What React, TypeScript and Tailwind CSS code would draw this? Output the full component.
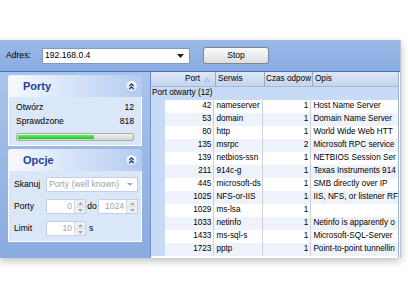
import React from "react";

const rows: [string, string, string, string][] = [
  ["42", "nameserver", "1", "Host Name Server"],
  ["53", "domain", "1", "Domain Name Server"],
  ["80", "http", "1", "World Wide Web HTT"],
  ["135", "msrpc", "2", "Microsoft RPC service"],
  ["139", "netbios-ssn", "1", "NETBIOS Session Ser"],
  ["211", "914c-g", "1", "Texas Instruments 914"],
  ["445", "microsoft-ds", "1", "SMB directly over IP"],
  ["1025", "NFS-or-IIS", "1", "IIS, NFS, or listener RF"],
  ["1029", "ms-lsa", "1", ""],
  ["1033", "netinfo", "1", "Netinfo is apparently o"],
  ["1433", "ms-sql-s", "1", "Microsoft-SQL-Server"],
  ["1723", "pptp", "1", "Point-to-point tunnellin"],
];

const Collapse = () => (
  <svg width="13" height="13" viewBox="0 0 13 13">
    <defs>
      <linearGradient id="cg" x1="0" y1="0" x2="0" y2="1">
        <stop offset="0" stopColor="#ffffff" />
        <stop offset="1" stopColor="#c9d8f2" />
      </linearGradient>
    </defs>
    <circle cx="6.5" cy="6.5" r="6" fill="url(#cg)" stroke="#a9bfe6" strokeWidth="0.8" />
    <path d="M4.3 6 L6.5 3.8 L8.7 6 M4.3 9 L6.5 6.8 L8.7 9" fill="none" stroke="#1e3470" strokeWidth="1.2" />
  </svg>
);

const Spin = ({ value, w }: { value: string; w: string }) => (
  <div className={`flex h-[15px] ${w} border border-[#c5cfdd] bg-white`}>
    <div className="flex-1 text-right pr-[2px] text-[#a3a3a3] leading-[13px]">{value}</div>
    <div className="w-[11px] flex flex-col border-l border-[#d6dbe2] bg-[#eef0f3]">
      <div className="flex-1 flex items-center justify-center border-b border-[#d6dbe2]">
        <svg width="5" height="3" viewBox="0 0 5 3"><path d="M0 3 L2.5 0 L5 3 Z" fill="#a8a8a8" /></svg>
      </div>
      <div className="flex-1 flex items-center justify-center">
        <svg width="5" height="3" viewBox="0 0 5 3"><path d="M0 0 L2.5 3 L5 0 Z" fill="#a8a8a8" /></svg>
      </div>
    </div>
  </div>
);

const GroupHeader = ({ title }: { title: string }) => (
  <div className="h-[22px] flex items-center justify-between pl-[15px] pr-[4px] rounded-t-[3px] bg-gradient-to-r from-[#f7faff] to-[#b3cbf0]">
    <span className="font-bold text-[11px] text-[#21409a]">{title}</span>
    <Collapse />
  </div>
);

export default function App() {
  return (
    <div className="w-[408px] h-[299px] bg-white overflow-hidden pt-[40px] text-[8.6px] text-black" style={{ fontFamily: '"Liberation Sans", Arial, sans-serif' }}>
      <div className="w-[401px] h-[218px] flex flex-col border-r border-[#b9c5d6] shadow-[0_3px_8px_rgba(0,0,0,0.25)]">
        {/* toolbar */}
        <div className="h-[32px] flex items-center bg-gradient-to-b from-[#9ab9e8] to-[#89abe0] border-b border-[#4b70c2]">
          <span className="w-[42px] pl-[6px]">Adres:</span>
          <div className="w-[148px] h-[16px] flex items-center justify-between bg-white border border-[#7f9db9] pl-[2px] pr-[5px]">
            <span>192.168.0.4</span>
            <svg width="7" height="4" viewBox="0 0 7 4"><path d="M0 0 H7 L3.5 4 Z" fill="#222" /></svg>
          </div>
          <button className="ml-[13px] w-[66px] h-[17px] rounded-[3px] border border-[#7b8694] bg-gradient-to-b from-[#fbfbfb] to-[#dedede] text-[8.6px] leading-none">
            Stop
          </button>
        </div>
        {/* content */}
        <div className="flex-1 flex min-h-0">
          <div className="w-[151px] px-[8px] pt-[3px] flex flex-col gap-[3px] bg-gradient-to-b from-[#a9c4ec] to-[#8aabdf] border-r border-[#6f90cc]">
            <div className="flex flex-col">
              <GroupHeader title="Porty" />
              <div className="h-[49px] bg-[#dae7f9] border border-t-0 border-white px-[7px] pt-[3px]">
                <div className="h-[14px] flex items-center justify-between"><span>Otwórz</span><span>12</span></div>
                <div className="h-[14px] flex items-center justify-between"><span>Sprawdzone</span><span>818</span></div>
                <div className="mt-[5px] h-[8px] rounded-[2px] border border-[#a9a9a9] bg-gradient-to-b from-[#f2f2f2] to-[#d4d4d4] p-[1px]">
                  <div className="h-full w-[67%] bg-gradient-to-b from-[#5ef05e] to-[#19c419]" />
                </div>
              </div>
            </div>
            <div className="flex flex-col">
              <GroupHeader title="Opcje" />
              <div className="h-[71px] bg-[#dae7f9] border border-t-0 border-white pl-[5px] pt-[6px] flex flex-col gap-[7px]">
                <div className="flex items-center">
                  <span className="w-[32px]">Skanuj</span>
                  <div className="w-[92px] h-[15px] flex items-center justify-between border border-[#c5cfdd] bg-white pl-[2px] pr-[4px] text-[#a3a3a3]">
                    <span>Porty (well known)</span>
                    <svg width="6" height="3" viewBox="0 0 6 3"><path d="M0 0 H6 L3 3 Z" fill="#a8a8a8" /></svg>
                  </div>
                </div>
                <div className="flex items-center">
                  <span className="w-[32px]">Porty</span>
                  <Spin value="0" w="w-[40px]" />
                  <span className="w-[12px] text-center">do</span>
                  <Spin value="1024" w="w-[40px]" />
                </div>
                <div className="flex items-center">
                  <span className="w-[32px]">Limit</span>
                  <Spin value="10" w="w-[40px]" />
                  <span className="pl-[3px]">s</span>
                </div>
              </div>
            </div>
          </div>
          {/* table */}
          <div className="w-[248px] flex flex-col bg-white border-r border-[#9fb3d3] overflow-hidden text-[8.2px]">
            <div className="h-[15px] flex items-center bg-gradient-to-b from-[#dfe8f6] to-[#c4d4ec] border-b border-[#a6b9d8] whitespace-nowrap">
              <div className="w-[65px] h-full flex items-center justify-end pr-[5px] gap-[4px] border-r border-[#9aa9c0]">
                <span>Port</span>
                <svg width="6" height="5" viewBox="0 0 6 5"><path d="M0.5 4.5 L3 0.5 L5.5 4.5 Z" fill="none" stroke="#9eb3d6" strokeWidth="0.8" /></svg>
              </div>
              <div className="w-[49px] h-full flex items-center pl-[2px] border-r border-[#9aa9c0]">Serwis</div>
              <div className="w-[48px] h-full flex items-center pl-[1px] border-r border-[#9aa9c0]">Czas odpow</div>
              <div className="flex-1 h-full flex items-center pl-[2px]">Opis</div>
            </div>
            <div className="h-[13px] flex items-center bg-[#c8dbf6] pl-[1px]">Port otwarty (12)</div>
            <div className="flex">
              <div className="w-[16px] bg-[#c8dbf6]" />
              <div className="flex-1 flex flex-col">
                {rows.map((r, i) => (
                  <div key={r[0]} className={`h-[13px] flex items-center whitespace-nowrap ${i % 2 === 1 ? "bg-[#eef3fb]" : "bg-white"}`}>
                    <div className="w-[49px] h-full flex items-center justify-end pr-[2px] border-r border-[#d0d0d0]">{r[0]}</div>
                    <div className="w-[49px] h-full flex items-center pl-[2px] border-r border-[#d0d0d0]">{r[1]}</div>
                    <div className="w-[48px] h-full flex items-center justify-end pr-[2px] border-r border-[#d0d0d0]">{r[2]}</div>
                    <div className="flex-1 h-full flex items-center pl-[2px]">{r[3]}</div>
                  </div>
                ))}
              </div>
            </div>
          </div>
        </div>
      </div>
    </div>
  );
}
